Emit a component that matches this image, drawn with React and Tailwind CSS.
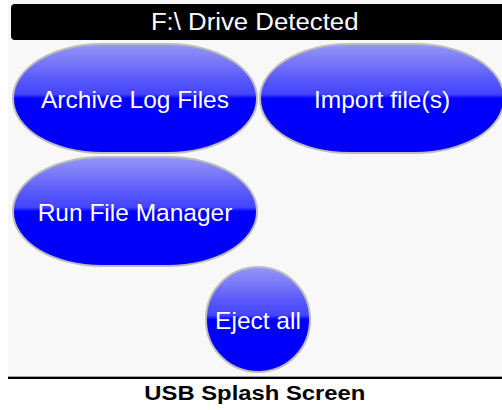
const OvalButton = ({ label, className }) => (
  <button
    className={`flex items-center justify-center pt-[3px] border-2 border-[#bcbcbc] bg-[linear-gradient(to_bottom,#9494f6_0%,#7a7af8_15%,#5c5cfb_30%,#4444fd_46%,#0000ff_50%,#0000f8_100%)] text-white text-[24.5px] leading-none ${className}`}
  >
    {label}
  </button>
);

export default function App() {
  return (
    <div className="w-[502px] h-[410px] bg-white overflow-hidden font-['Liberation_Sans',Arial,sans-serif]">
      <div className="ml-[8px] h-[376px] bg-[#f8f8f8] pt-[4px] pl-[3px]">
        <div className="h-[36px] bg-black rounded-l-[4px] flex items-center justify-center text-white leading-none pr-[3px]">
          <span className="text-[23px] scale-x-[1.12]">F:\ Drive Detected</span>
        </div>
        <div className="mt-[3px] pl-[1px] grid grid-cols-[246px_246px] gap-x-[1px] gap-y-[2px]">
          <OvalButton label="Archive Log Files" className="h-[111px] rounded-[90px/55px]" />
          <OvalButton label="Import file(s)" className="h-[111px] rounded-[90px/55px]" />
          <OvalButton label="Run File Manager" className="h-[111px] rounded-[90px/55px]" />
          <div />
        </div>
        <div className="flex justify-center -mt-[1px]">
          <OvalButton label="Eject all" className="w-[106px] h-[107px] rounded-full ml-[3px]" />
        </div>
      </div>
      <div className="ml-[8px] h-[1px] bg-[#a0a0a0]" />
      <div className="ml-[8px] h-[2px] bg-black" />
      <div className="ml-[8px] flex justify-center pt-[4px]">
        <span className="text-[20px] font-bold text-black leading-none scale-x-[1.19]">USB Splash Screen</span>
      </div>
    </div>
  );
}
